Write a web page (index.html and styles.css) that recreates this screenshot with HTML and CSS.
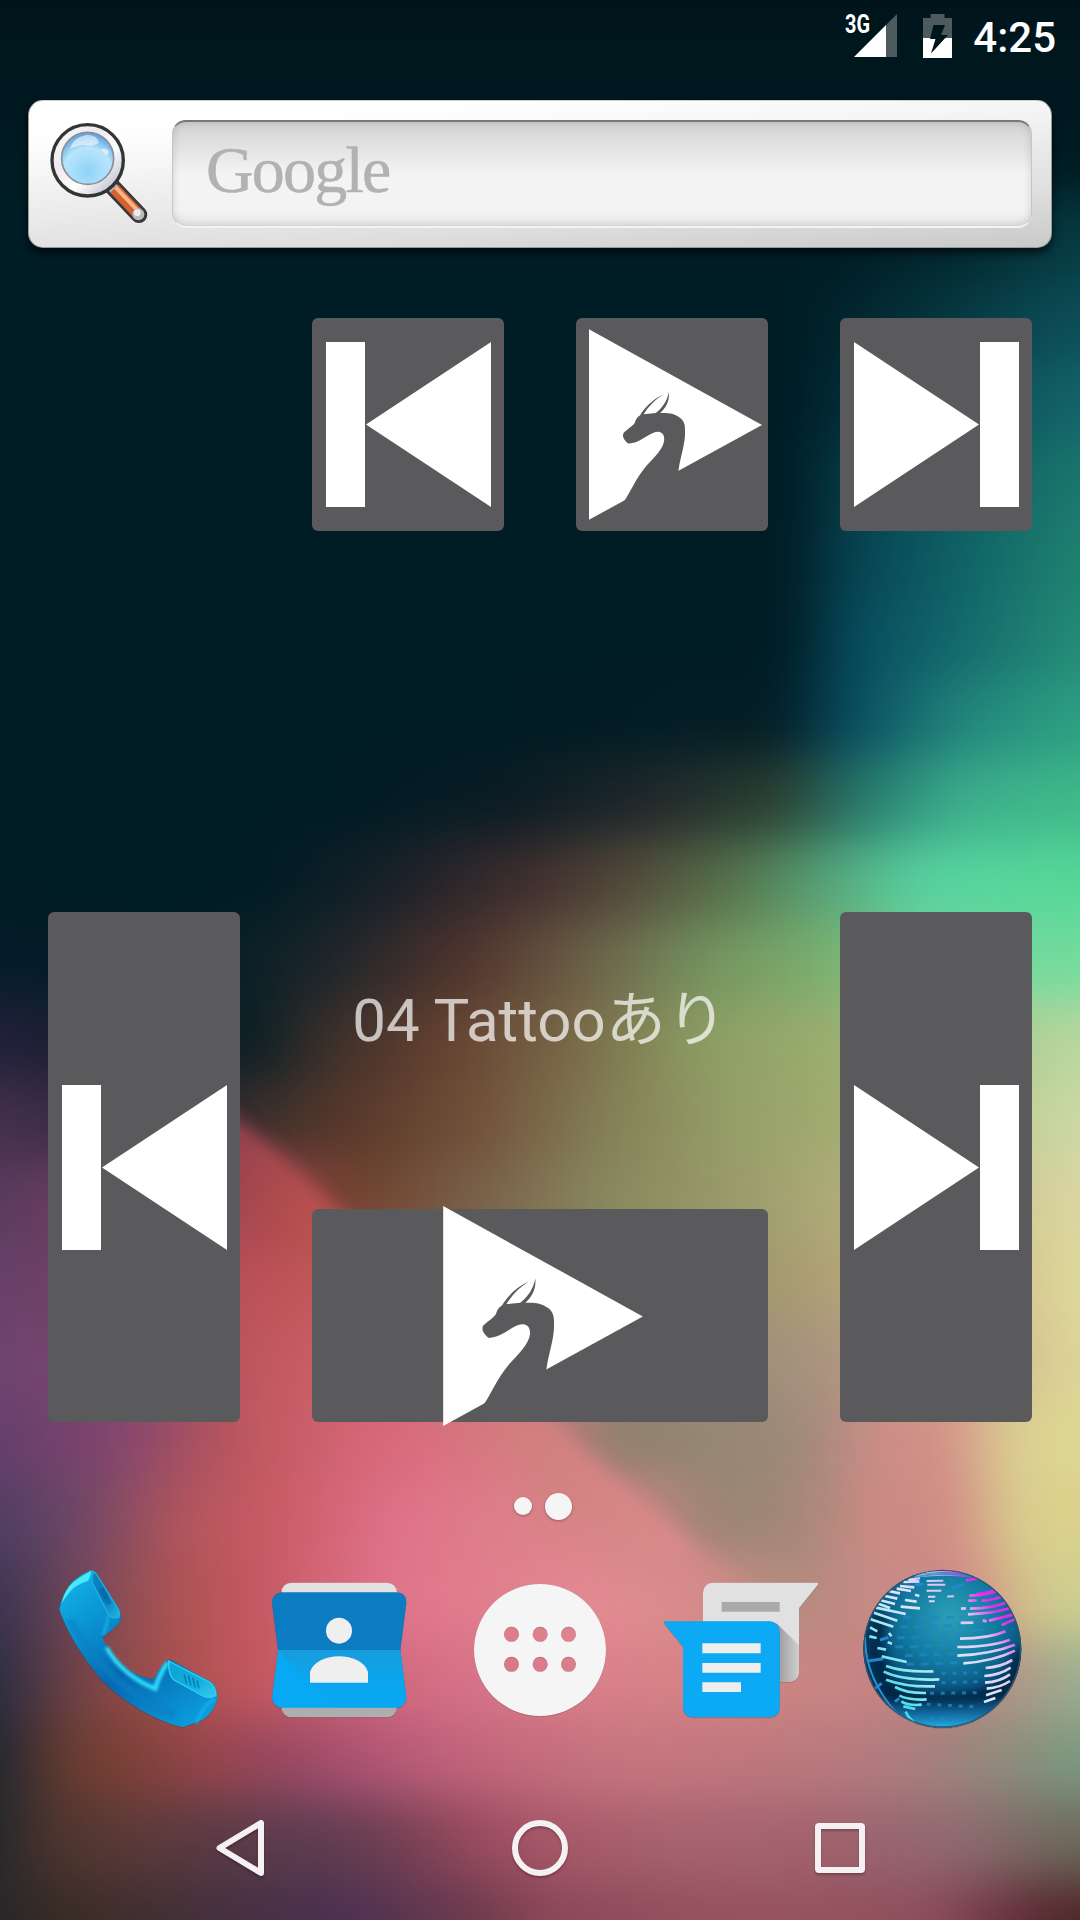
FILE: index.html
```html
<!DOCTYPE html>
<html lang="ja">
<head>
<meta charset="utf-8">
<title>Home</title>
<link rel="stylesheet" href="styles.css">
</head>
<body>
<svg class="defs" width="0" height="0" aria-hidden="true">
  <symbol id="icon-prev" viewBox="0 0 165 165"><path fill="#fff" d="M0 0h39v165H0zM40 82.500 165 0v165z"/></symbol>
  <symbol id="icon-next" viewBox="0 0 165 165"><path fill="#fff" d="M126 0h39v165h-39zM125 82.500 0 0v165z"/></symbol>
  <symbol id="icon-dragon-play" viewBox="432 766 598 659">
    <path fill="#fff" d="M432 766 1030 1097 432 1425z"/>
    <path fill="#5a5a5c" d="M741 1256C748 1205 766 1160 764 1118C765 1092 758 1080 745 1071C725 1056 705 1055 678 1056C698 1037 711 1015 708 983C702 1015 685 1038 663 1056L621 1060C638 1032 663 1008 690 991C655 1007 625 1035 608 1064C596 1071 593 1080 590 1090C580 1103 560 1115 552 1124C546 1135 551 1147 567 1161C590 1162 610 1149 630 1137C650 1124 664 1119 676 1121C689 1124 693 1137 692 1150C688 1180 660 1207 630 1239C592 1285 575 1330 555 1358L572 1378 765 1272z"/>
  </symbol>
</svg>

<div class="screen">
  <div class="wallpaper">
    <div class="bands">
      <i class="b0"></i><i class="b1"></i><i class="b2"></i><i class="b3"></i><i class="b4"></i><i class="b5"></i><i class="b6"></i><i class="b7"></i><i class="b8"></i><i class="b9"></i><i class="b10"></i><i class="b11"></i><i class="b12"></i><i class="b13"></i><i class="b14"></i><i class="b15"></i><i class="b16"></i><i class="b17"></i><i class="b18"></i><i class="b19"></i><i class="b20"></i><i class="b21"></i><i class="b22"></i><i class="b23"></i><i class="b24"></i><i class="b24"></i>
    </div>
    <svg class="petal" viewBox="0 0 1080 1920">
      <defs>
        <linearGradient id="along" gradientUnits="userSpaceOnUse" x1="200" y1="1100" x2="760" y2="1620">
          <stop offset="0" stop-color="#8c3c52"/><stop offset=".2" stop-color="#b9504f"/><stop offset=".45" stop-color="#d36d70"/><stop offset=".62" stop-color="#d3807f"/><stop offset=".85" stop-color="#d98a8a"/><stop offset="1" stop-color="#cf8886" stop-opacity="0"/>
        </linearGradient>
        <linearGradient id="across" gradientUnits="userSpaceOnUse" x1="480" y1="1350" x2="410" y2="1426">
          <stop offset="0" stop-color="#fff"/><stop offset=".3" stop-color="#fff" stop-opacity=".85"/><stop offset="1" stop-color="#fff" stop-opacity="0"/>
        </linearGradient>
        <filter id="soft" x="-20%" y="-20%" width="140%" height="140%"><feGaussianBlur stdDeviation="9"/></filter>
        <mask id="fade" maskUnits="userSpaceOnUse" x="0" y="900" width="1080" height="1020"><rect y="900" width="1080" height="1020" fill="url(#across)"/></mask>
      </defs>
      <g mask="url(#fade)"><path filter="url(#soft)" fill="url(#along)" d="M185 1090C230 1110 280 1150 326 1200L551 1422L640 1500L790 1625L700 1730L100 1170z"/></g>
    </svg>
    <div class="scrim"></div>
  </div>

  <header class="status">
    <svg width="54" height="46" viewBox="0 0 54 46">
      <text class="net" x="1" y="21" textLength="25" lengthAdjust="spacingAndGlyphs">3G</text>
      <path fill="#4d5b5f" d="M53 2v43H42V13z"/><path fill="#fff" d="M42 13v32H10z"/>
    </svg>
    <svg width="29" height="46" viewBox="0 0 29 46">
      <path fill="#4d5b5f" d="M7.500 2h14v4H29v20H0V6h7.500z"/><path fill="#fff" d="M0 26h29v20H0z"/>
      <path fill="#00151b" d="M10.500 13H22l-4 10h7L8 41.500 12.500 27H7z"/>
    </svg>
    <span class="clock">4:25</span>
  </header>

  <div class="search">
    <svg class="glass" width="104" height="110" viewBox="0 0 312 330">
      <defs>
        <linearGradient id="rim" x1="0" y1="0" x2="1" y2="1"><stop offset="0" stop-color="#fff"/><stop offset=".35" stop-color="#eee9ee"/><stop offset=".6" stop-color="#fff"/><stop offset="1" stop-color="#a9a9bd"/></linearGradient>
        <radialGradient id="lens" cx=".5" cy=".75" r=".7"><stop offset="0" stop-color="#8ed3f8"/><stop offset=".65" stop-color="#b8e5fb"/><stop offset="1" stop-color="#62a9e2"/></radialGradient>
      </defs>
      <path d="M189 193 273 281" stroke="#38383a" stroke-width="50" stroke-linecap="round"/>
      <path d="M186 191 204 210" stroke="#b7b7bd" stroke-width="30"/>
      <path d="M199 203 268 276" stroke="#d4622f" stroke-width="34"/>
      <path d="M203 199 272 272" stroke="#f9b58a" stroke-width="12"/>
      <circle cx="271" cy="280" r="18" fill="#bbb"/><circle cx="268" cy="275" r="10" fill="#eee"/>
      <circle cx="119" cy="118" r="107" fill="url(#rim)" stroke="#333436" stroke-width="10"/>
      <circle cx="119" cy="112" r="78" fill="url(#lens)" stroke="#8b8f98" stroke-width="5"/>
      <path fill="#fff" opacity=".55" d="M66 84Q76 47 119 41Q152 44 152 66Q132 79 110 71Q84 73 66 84zM158 84Q182 78 183 94Q180 106 170 100z"/>
    </svg>
    <div class="field"><span class="google">Google</span></div>
  </div>

  <main class="widgets">
    <button class="btn prev-s"><svg width="165" height="165"><use href="#icon-prev"/></svg></button>
    <button class="btn play-s"><svg width="173" height="191"><use href="#icon-dragon-play"/></svg></button>
    <button class="btn next-s"><svg width="165" height="165"><use href="#icon-next"/></svg></button>
    <button class="btn prev-l"><svg width="165" height="165"><use href="#icon-prev"/></svg></button>
    <div class="title">04 Tattoo<span class="kana">あり</span></div>
    <button class="btn play-l"><svg width="200" height="220"><use href="#icon-dragon-play"/></svg></button>
    <button class="btn next-l"><svg width="165" height="165"><use href="#icon-next"/></svg></button>
  </main>

  <div class="pages"><span class="dot"></span><span class="dot current"></span></div>

  <nav class="dock">
    <svg viewBox="0 0 201 180">
      <defs>
        <linearGradient id="ph" x1="0" y1="0" x2=".8" y2="1"><stop offset="0" stop-color="#14b8ea"/><stop offset=".3" stop-color="#0a93d2"/><stop offset=".6" stop-color="#0667b0"/><stop offset="1" stop-color="#0b9bdc"/></linearGradient>
        <linearGradient id="ear" x1="0" y1="0" x2="1" y2="1"><stop offset="0" stop-color="#0b86c0"/><stop offset=".5" stop-color="#0878ba"/><stop offset="1" stop-color="#26b6e6"/></linearGradient>
        <linearGradient id="ear2" x1="0" y1="0" x2="1" y2="1"><stop offset="0" stop-color="#0fa0d2"/><stop offset=".6" stop-color="#13aedd"/><stop offset="1" stop-color="#36cdf2"/></linearGradient>
        <filter id="glow"><feGaussianBlur stdDeviation="4"/></filter>
      </defs>
      <g class="lift" transform="translate(2 -20) scale(.33333)">
        <path fill="url(#ph)" d="M97 125Q125 102 153 90Q163 91 170 101L239 210Q247 238 237 250Q220 272 188 290C205 350 280 415 343 416Q355 385 383 360Q393 358 405 366L517 428Q532 445 532 480Q520 515 492 538L430 562C360 548 250 490 185 420C125 350 75 265 58 208Q65 165 97 125z"/>
        <path fill="#45ebf8" d="M64 190Q75 145 102 125Q130 104 154 93Q152 108 145 122Q105 135 90 155z"/>
        <path fill="url(#ear)" stroke="#19b4e4" stroke-width="4" d="M160 97Q166 96 173 108L236 210Q243 235 230 233Q210 235 203 218L158 130Q152 112 160 97z"/>
        <path fill="url(#ear2)" stroke="#2ad0f2" stroke-width="4" d="M386 363 511 428Q528 442 528 466Q515 478 492 469L402 420Q384 405 386 363z"/>
        <path fill="none" stroke="#064f91" stroke-width="4" opacity=".6" d="M178 145 206 193M186 143 212 190M432 403l8 27M445 407l8 29M458 413l8 29M471 421l6 24"/>
        <path fill="none" stroke="#33dff8" stroke-width="13" filter="url(#glow)" d="M200 322C230 380 290 425 346 446Q357 405 383 367"/>
        <path fill="none" stroke="#087fc4" stroke-width="24" opacity=".6" filter="url(#glow)" d="M90 240C145 345 235 455 405 525"/>
        <path fill="none" stroke="#17b8e9" stroke-width="7" filter="url(#glow)" d="M204 225Q203 255 188 285M525 478Q490 490 468 555"/>
      </g>
    </svg>

    <svg viewBox="0 0 201 180">
      <defs><linearGradient id="cast" x1="0" y1="0" x2="0" y2="1"><stop offset="0" stop-color="#179cdc"/><stop offset="1" stop-color="#08a7f2" stop-opacity=".3"/></linearGradient></defs>
      <g class="lift" transform="translate(-199 -20) scale(.33333)">
        <rect x="724" y="128" width="347" height="100" rx="30" fill="#e2e2e2"/>
        <rect x="724" y="430" width="347" height="102" rx="30" fill="#aeaeae"/>
        <path fill="#0b7cc1" d="M724 157H1071Q1101 160 1099 188L1081 330H714L696 188Q696 160 724 157z"/>
        <path fill="#08a9f4" d="M714 330H1081L1099 472Q1098 500 1070 503H724Q698 500 696 472z"/>
        <path fill="url(#cast)" d="M714 330H1081L1099 472Q1098 500 1070 503H884z"/>
        <circle cx="897" cy="272" r="39" fill="#efefef"/><path fill="#efefef" d="M810 428V396C830 333 965 333 984 396V428z"/>
      </g>
    </svg>

    <svg viewBox="0 0 201 180">
      <g class="lift" transform="translate(20 -90) scale(.33333)">
        <path fill="#f5f5f5" fill-rule="evenodd" d="M42 540a198 198 0 1 0 396 0a198 198 0 1 0-396 0zM132 493a22.500 22.500 0 1 0 45 0a22.500 22.500 0 1 0-45 0zM218 493a22.500 22.500 0 1 0 45 0a22.500 22.500 0 1 0-45 0zM303 493a22.500 22.500 0 1 0 45 0a22.500 22.500 0 1 0-45 0zM132 583a22.500 22.500 0 1 0 45 0a22.500 22.500 0 1 0-45 0zM218 583a22.500 22.500 0 1 0 45 0a22.500 22.500 0 1 0-45 0zM303 583a22.500 22.500 0 1 0 45 0a22.500 22.500 0 1 0-45 0z"/>
      </g>
    </svg>

    <svg viewBox="0 0 201 180">
      <defs><linearGradient id="shade" x1="0" x2="1"><stop offset="0" stop-color="#999"/><stop offset="1" stop-color="#d0d0d0"/></linearGradient></defs>
      <g class="lift" transform="translate(-181 -90) scale(.33333)">
        <path fill="#e1e1e1" d="M758 338H1072Q1077 340 1073 345L1017 415V607Q1015 634 988 636H729V367Q731 340 758 338z"/>
        <path fill="url(#shade)" d="M950 460 1017 526V607Q1015 634 988 636H950z"/>
        <path fill="#a9a9a9" d="M785 396H959V425H785z"/>
      </g>
      <g class="lift" transform="translate(-181 -90) scale(.33333)">
        <path fill="#0caaf5" d="M615 454H930Q957 457 959 484V713Q957 740 930 742H699Q671 740 669 713V530L612 460Q610 455 615 454z"/>
        <path fill="#eee" d="M727 520H902V550H727zM727 579H902V608H727zM727 637H843V666H727z"/>
      </g>
    </svg>

    <svg viewBox="0 0 201 180">
      <defs>
        <radialGradient id="sea" cx=".55" cy=".3" r=".75"><stop offset="0" stop-color="#2ba0ba"/><stop offset=".4" stop-color="#11799f"/><stop offset=".75" stop-color="#06426f"/><stop offset="1" stop-color="#03284d"/></radialGradient>
        <linearGradient id="pool" x1="0" y1="0" x2="0" y2="1"><stop offset=".8" stop-color="#1674b4" stop-opacity="0"/><stop offset="1" stop-color="#25b1ea"/></linearGradient>
        <linearGradient id="land" gradientUnits="userSpaceOnUse" x1="120" y1="470" x2="520" y2="120"><stop offset="0" stop-color="#16dce0"/><stop offset=".3" stop-color="#a4e8f2"/><stop offset=".5" stop-color="#dde8fa"/><stop offset=".72" stop-color="#d9c6f5"/><stop offset=".85" stop-color="#e32af0"/></linearGradient>
        <clipPath id="ball"><circle cx="307" cy="296" r="237"/></clipPath>
        <filter id="haze" x="-50%" y="-50%" width="200%" height="200%"><feGaussianBlur stdDeviation="14"/></filter>
      </defs>
      <g class="lift" transform="translate(-2 -10) scale(.33333)">
        <circle cx="307" cy="296" r="237" fill="url(#sea)"/>
        <g clip-path="url(#ball)" fill="none">
          <path stroke="#001a38" stroke-width="46" opacity=".75" filter="url(#haze)" d="M125 190Q75 330 175 450M180 435Q320 480 490 420M480 430Q550 340 535 300"/>
          <circle cx="307" cy="296" r="237" fill="url(#pool)"/>
          <path stroke="#2593cf" stroke-width="6" d="M75 260Q75 350 125 430T215 510"/>
          <path stroke="#2185c5" stroke-width="9" stroke-dasharray="23 20" opacity=".75" d="M190 202H365M182 232 370 225M172 263 360 256M166 291 350 284M195 317 350 311M200 343 370 338"/>
          <path stroke="#2185c5" stroke-width="9" stroke-dasharray="12 20" opacity=".8" d="M305 370 425 368M305 398 425 395M270 430 425 428M260 463 400 470M270 505H320"/>
          <path stroke="#2188cf" stroke-width="9" d="M80 334 130 326M120 270 145 262M165 455 178 445M105 415l20-15M338 114 370 104M225 103h25"/>
          <g stroke="url(#land)" stroke-width="8">
            <path d="M234 69Q310 56 380 69M222 79Q310 68 392 78M205 90 240 84M190 96 238 94M180 108 223 112M170 116 213 123M146 123 180 130M135 138 172 146M122 151 165 162M115 161 150 174M182 170 240 175M108 173 197 192M102 188 172 212M92 208 160 230M90 232 112 244M88 259 110 264M112 294 138 299M147 249 154 259M143 277 156 281M195 150 230 155M225 134 238 138"/>
            <path stroke-width="6" d="M260 93 310 92.500M262 104.500 316 104M260 122.500 304 122M264 140.500 286 140M267 154 284 153.500M322 139.500 342 139"/>
            <path d="M378 91 412 86M388 137Q440 136 480 120M410 132Q450 130 470 116M385 152 410 151.500M425 152Q465 150 493 136M363 176 378 175M390 176Q460 175 505 155M384 193Q470 190 515 172M362 218.500 400 218M428 211l12 3M447 212 520 194M485 225 526 207M360 266Q445 266 497 244M352 291Q450 291 510 269M352 317Q455 312 525 284M370 340Q460 334 525 302M437 354Q485 350 517 330M433 378Q480 375 512 353M435 398Q480 395 510 373M440 416Q480 413 510 393M438 436 485 420M432 456 466 444"/>
            <path d="M125 319 200 336M138 348Q190 367 280 364M131 365Q190 393 298 388M138 389Q200 412 285 409M165 411Q200 430 258 429M178 437Q210 452 260 448M184 454Q205 468 245 464M190 469 226 477M197 485 205 500M202 496 222 518"/>
          </g>
          <path stroke="#238bc7" stroke-width="6" opacity=".8" d="M220 82Q310 64 395 79M383 244 430 239"/>
          <circle cx="307" cy="296" r="235" stroke="#31566f" stroke-width="4"/>
        </g>
      </g>
    </svg>
  </nav>

  <footer class="navbar">
    <svg width="60" height="64" viewBox="0 0 60 64"><path d="M51 7V57L9.500 32z" stroke-linejoin="round"/></svg>
    <svg width="60" height="64" viewBox="0 0 60 64"><circle cx="30" cy="32" r="25"/></svg>
    <svg width="60" height="64" viewBox="0 0 60 64"><rect x="8" y="10" width="44" height="44" rx="1" stroke-linejoin="round"/></svg>
  </footer>
</div>
</body>
</html>
```
FILE: styles.css
```css
* { box-sizing: border-box; }
body { margin: 0; }
.defs { position: absolute; }

.screen {
  position: relative;
  width: 1080px;
  height: 1920px;
  overflow: hidden;
  display: flex;
  flex-direction: column;
  isolation: isolate;
  background: #001c24;
  font-family: Roboto, "Noto Sans CJK JP", sans-serif;
}

/* Wallpaper: horizontal colour bands blurred together */
.wallpaper { position: absolute; inset: 0; z-index: -1; overflow: hidden; }
.bands {
  position: absolute;
  left: -120px;
  top: -40px;
  width: 1320px;
  display: grid;
  grid-auto-rows: 80px;
  filter: blur(25px);
}
.bands i { display: block; }
.petal { position: absolute; inset: 0; }
.scrim { position: absolute; inset: 0 0 auto; height: 200px; background: linear-gradient(rgba(0,0,0,.25), transparent); }

.b0, .b1, .b2 { background: #001c24; }
.b3 { background: linear-gradient(90deg, #001d25 970px, #032a30 1100px, #063c44 1200px); }
.b4 { background: linear-gradient(90deg, #001d25 920px, #043038 1030px, #0a4650 1150px, #0c4e57 1200px); }
.b5 { background: linear-gradient(90deg, #001c24 910px, #02303c 980px, #0b4c54 1090px, #13646a 1200px); }
.b6 { background: linear-gradient(90deg, #001c24 910px, #053c4a 970px, #0e5a61 1080px, #1b786d 1200px); }
.b7 { background: linear-gradient(90deg, #001c24 910px, #064250 970px, #0f6267 1080px, #1f8370 1200px); }
.b8 { background: linear-gradient(90deg, #001c24 910px, #064a5c 970px, #13696d 1080px, #258c76 1200px); }
.b9 { background: linear-gradient(90deg, #001c24 600px, #041d25 900px, #07485e 965px, #22857c 1080px, #2da083 1200px); }
.b10 { background: linear-gradient(90deg, #001c24 470px, #0c1c24 640px, #22292b 780px, #2b4132 900px, #27786c 980px, #3cae8d 1080px, #40b988 1200px); }
.b11 { background: linear-gradient(90deg, #001c24 380px, #161f28 500px, #402e2e 650px, #54493a 750px, #55764d 860px, #55a67c 950px, #58d2a0 1040px, #55d897 1200px); }
.b12 { background: linear-gradient(90deg, #051c28 120px, #001c24 310px, #1d252a 450px, #52342d 590px, #6c6148 710px, #749460 830px, #7bb16f 950px, #72d7a0 1060px, #72dc9c 1200px); }
.b13 { background: linear-gradient(90deg, #23203a 120px, #0e1d28 250px, #081e24 370px, #3c302a 450px, #644030 560px, #7a6b49 700px, #8c9d63 820px, #9baf70 960px, #b8d8a0 1200px); }
.b14 { background: linear-gradient(90deg, #44304c 120px, #30283a 240px, #342b32 340px, #3a302a 385px, #59382a 470px, #725139 600px, #827d56 720px, #959f67 850px, #a2ab70 960px, #cddaa6 1200px); }
.b15 { background: linear-gradient(90deg, #573b60 120px, #7d4059 240px, #a44453 360px, #9f474c 410px, #6f402c 470px, #79614a 600px, #88875e 720px, #999a6a 850px, #b0ac78 960px, #dcd6a2 1200px); }
.b16 { background: linear-gradient(90deg, #66406a 120px, #783f60 240px, #b84f58 340px, #c45a5b 480px, #83653f 560px, #87795a 640px, #929068 780px, #a59a70 900px, #c4b080 1050px, #dfd99c 1200px); }
.b17 { background: linear-gradient(90deg, #6d4470 120px, #80446c 240px, #bd565c 360px, #cf626a 480px, #d66e75 570px, #8b7b66 650px, #9b8d76 840px, #a89380 940px, #cba384 1060px, #ddd798 1200px); }
.b18 { background: linear-gradient(90deg, #643f6b 120px, #80456f 230px, #bd575c 360px, #d8687a 500px, #da7d87 655px, #8d7f6c 735px, #948773 830px, #9f8a79 930px, #cc8c87 990px, #d38f87 1070px, #dbd192 1130px, #ddd790 1200px); }
.b19 { background: linear-gradient(90deg, #4f3e63 120px, #6e4766 200px, #b1555b 300px, #cb5b65 400px, #df718a 510px, #de7f8a 620px, #d88688 745px, #988572 835px, #a48778 920px, #cb8b85 990px, #d18b84 1075px, #d9cf8d 1135px, #dad28c 1200px); }
.b20 { background: linear-gradient(90deg, #3a3453 120px, #7a4957 210px, #a95351 290px, #c65862 380px, #e0738c 500px, #e2818f 630px, #e38d93 740px, #d98d8c 830px, #b08b7d 910px, #c58a84 980px, #d08888 1090px, #d1c88b 1150px, #cdcf91 1200px); }
.b21 { background: linear-gradient(90deg, #292d42 120px, #6e4048 190px, #974d48 260px, #c1565c 360px, #d0657a 480px, #d7748a 600px, #da808a 720px, #d28484 840px, #c88583 960px, #c08286 1060px, #b09887 1140px, #98b091 1200px); }
.b22 { background: linear-gradient(90deg, #22262f 120px, #6a3e2f 190px, #7f403a 258px, #96454b 327px, #964760 395px, #a85070 464px, #ba5c7a 533px, #c2667a 602px, #c67580 740px, #bf777e 878px, #b07c7f 1015px, #8f8a7c 1120px, #7a9a80 1200px); }
.b23 { background: linear-gradient(90deg, #23262a 120px, #4a342d 165px, #5c3a38 258px, #593a44 327px, #5c3c50 430px, #6e3e50 506px, #9a4a60 602px, #a65868 671px, #a8646f 809px, #a0626e 946px, #8f6a70 1084px, #6c6a5c 1190px); }
.b24 { background: linear-gradient(90deg, #28262a 120px, #3b2c24 189px, #44303c 327px, #4b3052 464px, #6e3b4c 602px, #8c4859 671px, #97545f 878px, #8d4e5b 1050px, #5c2a33 1153px, #4d2628 1200px); }

.status {
  height: 72px;
  display: flex;
  align-items: flex-start;
  justify-content: flex-end;
  padding: 12px 24px 0 0;
}
.status svg { overflow: visible; }
.status svg + svg { margin-left: 25px; }
.net { font: 700 25px Roboto, sans-serif; fill: #fff; }
.clock { margin-left: 21px; padding-top: 1px; font-size: 42px; font-weight: 500; line-height: 50px; color: #fff; }

.search {
  height: 148px;
  margin: 28px 28px 0;
  padding: 20px;
  display: flex;
  border-radius: 15px;
  border: 1px solid #999;
  border-top-color: #ccc;
  background: linear-gradient(176deg, #cfcfcf, #dedede 20%, #f5f5f5 65%, #fff 85%);
  box-shadow: 0 5px 9px rgba(0,0,0,.65);
}
.search { background: linear-gradient(176deg, #fff 15%, #f5f5f5 35%, #dedede 75%, #c9c9c9); }
.glass { margin: 0 20px 0 -1px; flex: none; }
.field {
  flex: 1;
  height: 107px;
  margin-top: -1px;
  margin-right: -1px;
  padding: 11px 0 0 33px;
  border-radius: 14px;
  border: 1px solid #c5c5c5;
  border-top: 2px solid #777;
  border-bottom-color: #f2f2f2;
  background: linear-gradient(#d2d2d2, #f4f4f4 50%, #f3f3f3 85%, #e6e6e6);
  box-shadow: inset 0 0 8px rgba(0,0,0,.15), 0 1px #f5f5f5;
}
.google { display: block; font: 66px/74px "Liberation Serif", serif; letter-spacing: -1.8px; color: #b2b2b2; -webkit-text-stroke: .5px #b2b2b2; }

.widgets {
  height: 1104px;
  margin-top: 70px;
  padding: 0 48px;
  display: grid;
  grid-template-columns: repeat(4, 192px);
  grid-template-rows: 213px 381px 297px 213px;
  column-gap: 72px;
}
.btn {
  display: flex;
  align-items: center;
  justify-content: center;
  padding: 0;
  border: 0;
  border-radius: 6px;
  background: #5a5a5c;
}
.btn svg { flex: none; overflow: visible; }
.prev-s { grid-area: 1 / 2; }
.play-s { grid-area: 1 / 3; padding-left: 6px; }
.next-s { grid-area: 1 / 4; }
.prev-l { grid-area: 3 / 1 / 5 / 2; }
.title {
  grid-area: 3 / 2 / 4 / 4;
  padding-top: 73px;
  text-align: center;
  font-size: 60px;
  line-height: 72px;
  color: rgba(255,255,255,.7);
}
.kana { letter-spacing: 1px; }
.play-l { grid-area: 4 / 2 / 5 / 4; padding-left: 6px; }
.next-l { grid-area: 3 / 4 / 5 / 5; }

.pages {
  height: 138px;
  padding: 30px 0 0 5px;
  display: flex;
  align-items: center;
  justify-content: center;
  gap: 13px;
}
.dot { width: 18px; height: 18px; border-radius: 50%; background: #f5f5f5; box-shadow: 0 1px 3px rgba(0,0,0,.3); }
.dot.current { width: 27px; height: 27px; }

.dock { height: 216px; padding: 0 37px 0 38px; display: grid; grid-template-columns: repeat(5, 201px); }
.dock svg { width: 201px; height: 180px; overflow: visible; }
.lift { filter: drop-shadow(0 1.500px 1.500px rgba(0,0,0,.35)); }

.navbar { height: 144px; padding: 0 90px; display: grid; grid-template-columns: repeat(3, 300px); place-items: center; }
.navbar svg { fill: none; stroke: #f5f0f2; stroke-width: 6; filter: drop-shadow(0 2px 1px rgba(0,0,0,.25)); }
```
